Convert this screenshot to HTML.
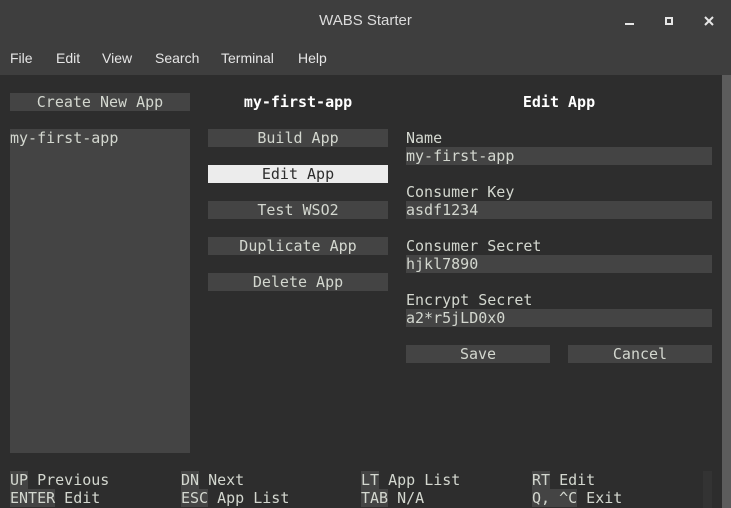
<!DOCTYPE html>
<html><head><meta charset="utf-8"><style>
body{margin:0;width:731px;height:508px;overflow:hidden;background:#2d2d2d;font-family:"DejaVu Sans Mono","Liberation Mono",monospace;}
#title{position:absolute;left:0;top:0;width:731px;height:75px;background:#3e3e3e;}
.t{position:absolute;font-family:"Liberation Sans","DejaVu Sans",sans-serif;color:#e6e6e6;font-size:15px;}
.m{position:absolute;font-size:15px;line-height:18px;color:#d3d7cf;white-space:pre;}
.b{position:absolute;background:#444;height:18px;}
.c{text-align:center;}
.k{background:#444;}
</style></head><body>
<div id="title"></div>
<div class="t" style="left:0;width:731px;text-align:center;top:12px;color:#dcdcdc">WABS Starter</div>
<div style="position:absolute;left:625px;top:23px;width:9px;height:2px;background:#e6e6e6"></div>
<div style="position:absolute;left:665px;top:17px;width:4px;height:4px;border:2px solid #e6e6e6"></div>
<svg style="position:absolute;left:704px;top:16px" width="10" height="10"><path d="M1 1L9 9M9 1L1 9" stroke="#e6e6e6" stroke-width="2"/></svg>
<div class="t" style="left:10px;top:50px;font-size:14px">File</div>
<div class="t" style="left:56px;top:50px;font-size:14px">Edit</div>
<div class="t" style="left:102px;top:50px;font-size:14px">View</div>
<div class="t" style="left:155px;top:50px;font-size:14px">Search</div>
<div class="t" style="left:221px;top:50px;font-size:14px">Terminal</div>
<div class="t" style="left:298px;top:50px;font-size:14px">Help</div>
<div style="position:absolute;left:722px;top:75px;width:9px;height:433px;background:#5c5c5c"></div>

<div class="b m c" style="left:10px;top:93px;width:180px">Create New App</div>
<div class="m c" style="left:208px;top:93px;width:180px;font-weight:bold;color:#fff">my-first-app</div>
<div class="m c" style="left:406px;top:93px;width:306px;font-weight:bold;color:#fff">Edit App</div>
<div class="b m" style="left:10px;top:129px;width:180px;height:324px">my-first-app</div>

<div class="b m c" style="left:208px;top:129px;width:180px">Build App</div>
<div class="b m c" style="left:208px;top:165px;width:180px;background:#ececec;color:#2d2d2d">Edit App</div>
<div class="b m c" style="left:208px;top:201px;width:180px">Test WSO2</div>
<div class="b m c" style="left:208px;top:237px;width:180px">Duplicate App</div>
<div class="b m c" style="left:208px;top:273px;width:180px">Delete App</div>

<div class="m" style="left:406px;top:129px">Name</div>
<div class="b m" style="left:406px;top:147px;width:306px">my-first-app</div>
<div class="m" style="left:406px;top:183px">Consumer Key</div>
<div class="b m" style="left:406px;top:201px;width:306px">asdf1234</div>
<div class="m" style="left:406px;top:237px">Consumer Secret</div>
<div class="b m" style="left:406px;top:255px;width:306px">hjkl7890</div>
<div class="m" style="left:406px;top:291px">Encrypt Secret</div>
<div class="b m" style="left:406px;top:309px;width:306px">a2*r5jLD0x0</div>
<div class="b m c" style="left:406px;top:345px;width:144px">Save</div>
<div class="b m c" style="left:568px;top:345px;width:144px">Cancel</div>

<div class="m" style="left:10px;top:471px"><span class="k">UP</span> Previous</div>
<div class="m" style="left:181px;top:471px"><span class="k">DN</span> Next</div>
<div class="m" style="left:361px;top:471px"><span class="k">LT</span> App List</div>
<div class="m" style="left:532px;top:471px"><span class="k">RT</span> Edit</div>
<div class="m" style="left:10px;top:489px"><span class="k">ENTER</span> Edit</div>
<div class="m" style="left:181px;top:489px"><span class="k">ESC</span> App List</div>
<div class="m" style="left:361px;top:489px"><span class="k">TAB</span> N/A</div>
<div class="m" style="left:532px;top:489px"><span class="k">Q, ^C</span> Exit</div>
<div style="position:absolute;left:703px;top:471px;width:9px;height:37px;background:#333"></div>
</body></html>
